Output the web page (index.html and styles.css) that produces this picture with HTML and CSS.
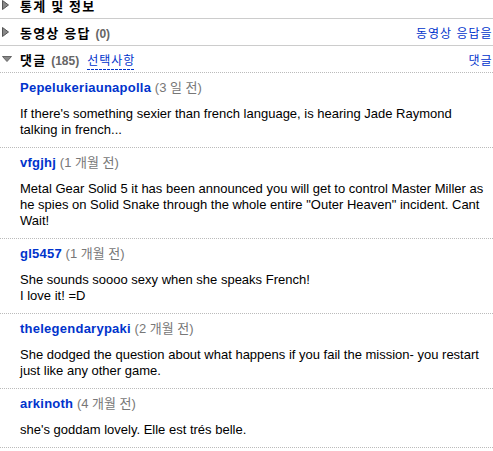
FILE: index.html
```html
<!DOCTYPE html>
<html lang="ko">
<head>
    <meta charset="UTF-8">
    <meta name="viewport" content="width=device-width, initial-scale=1.0">
    <title>댓글</title>
    <link rel="stylesheet" href="styles.css">
</head>
<body>
    <div class="panel">
        <div class="section first">
            <span class="arrow">
                <svg width="7" height="10" viewBox="0 0 7 10"><path d="M0.5 0.5 L6.5 5 L0.5 9.5 Z" fill="#888" stroke="#555"/></svg>
            </span>
            <h2>통계 및 정보</h2>
        </div>

        <div class="section">
            <span class="arrow">
                <svg width="7" height="10" viewBox="0 0 7 10"><path d="M0.5 0.5 L6.5 5 L0.5 9.5 Z" fill="#888" stroke="#555"/></svg>
            </span>
            <h2>동영상 응답 <span class="count">(0)</span></h2>
            <a class="action" href="#">동영상 응답을 게시</a>
        </div>

        <div class="section open">
            <span class="arrow">
                <svg width="10" height="6" viewBox="0 0 10 6"><path d="M0.5 0.5 L9.5 0.5 L5 5.5 Z" fill="#888" stroke="#666"/></svg>
            </span>
            <h2>댓글 <span class="count">(185)</span></h2>
            <a class="options" href="#">선택사항</a>
            <a class="action" href="#">댓글 게시</a>
        </div>

        <ul class="comments">
            <li class="comment">
                <div class="meta"><a class="author" href="#">Pepelukeriaunapolla</a> <span class="date">(3 일 전)</span></div>
                <p>If there's something sexier than french language, is hearing Jade Raymond talking in french...</p>
            </li>
            <li class="comment">
                <div class="meta"><a class="author" href="#">vfgjhj</a> <span class="date">(1 개월 전)</span></div>
                <p>Metal Gear Solid 5 it has been announced you will get to control Master Miller as he spies on Solid Snake through the whole entire "Outer Heaven" incident. Cant Wait!</p>
            </li>
            <li class="comment">
                <div class="meta"><a class="author" href="#">gl5457</a> <span class="date">(1 개월 전)</span></div>
                <p>She sounds soooo sexy when she speaks French!<br>I love it! =D</p>
            </li>
            <li class="comment">
                <div class="meta"><a class="author" href="#">thelegendarypaki</a> <span class="date">(2 개월 전)</span></div>
                <p>She dodged the question about what happens if you fail the mission- you restart just like any other game.</p>
            </li>
            <li class="comment">
                <div class="meta"><a class="author" href="#">arkinoth</a> <span class="date">(4 개월 전)</span></div>
                <p>she's goddam lovely. Elle est trés belle.</p>
            </li>
        </ul>
    </div>
</body>
</html>
```

FILE: styles.css
```css
body {
    margin: 0;
    overflow: hidden;
    font-family: "Liberation Sans", Arial, "Noto Sans CJK KR", sans-serif;
    font-size: 13px;
    color: #000;
    background-color: #fff;
}

a {
    color: #0033cc;
    text-decoration: none;
}

.panel {
    width: 521px;
    padding-right: 3px;
}

/* collapsible section headers */
.section {
    display: flex;
    align-items: center;
    height: 26px;
    border-bottom: 1px solid #cccccc;
}

.section.first {
    margin-top: -8px;
}

.section.open {
    border-bottom: 1px dotted #bbbbbb;
}

.arrow {
    width: 20px;
    display: flex;
    align-items: center;
    padding-left: 2px;
    box-sizing: border-box;
}

.section h2 {
    margin: 0;
    font-size: 13px;
    font-weight: bold;
    letter-spacing: 1.2px;
}

.count {
    font-size: 12px;
    color: #666;
    letter-spacing: 0;
}

.options {
    margin: 6px 0 0 8px;
    font-size: 12px;
    letter-spacing: 1px;
    line-height: 13px;
    padding-bottom: 2px;
    background: repeating-linear-gradient(to right, #0033cc 0 3px, transparent 3px 4px) left bottom / 100% 1px no-repeat;
}

.action {
    margin-left: auto;
    font-size: 12px;
    letter-spacing: 1px;
    white-space: nowrap;
}

/* comment list */
.comments {
    list-style: none;
    margin: 0;
    padding: 0;
}

.comment {
    padding: 7px 31px 9px 20px;
    border-bottom: 1px dotted #bbbbbb;
}

.meta {
    line-height: 16px;
}

.author {
    font-weight: bold;
    letter-spacing: 0.25px;
}

.date {
    color: #777;
}

.comment p {
    margin: 10px 0 0;
    line-height: 16px;
}
```
